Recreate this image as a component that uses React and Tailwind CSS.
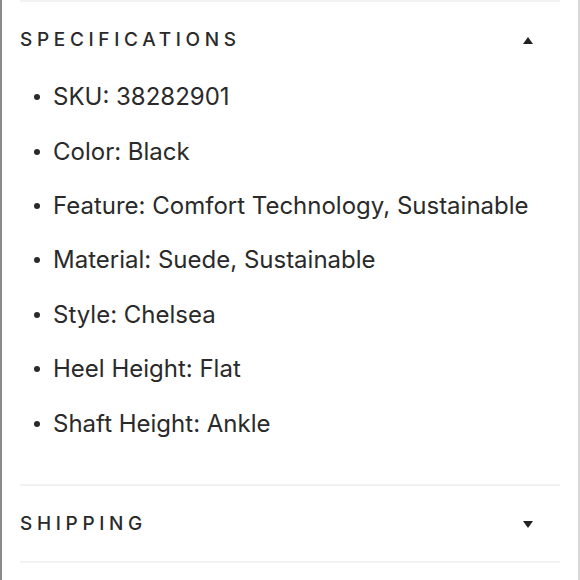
import React from "react";

const specs = [
  "SKU: 38282901",
  "Color: Black",
  "Feature: Comfort Technology, Sustainable",
  "Material: Suede, Sustainable",
  "Style: Chelsea",
  "Heel Height: Flat",
  "Shaft Height: Ankle",
];

const Caret = ({ up }) => (
  <svg width="10" height="7" viewBox="0 0 10 7" className="mr-[27px]">
    <path d={up ? "M5 0 L10 7 L0 7 Z" : "M0 0 L10 0 L5 7 Z"} fill="#222" />
  </svg>
);

const App = () => {
  return (
    <div
      className="w-[580px] h-[580px] bg-white border-l-2 border-l-[#8a8a8a] border-r-2 border-r-[#d8d8d8] overflow-hidden text-[#2a2a2a]"
      style={{ fontFamily: "Inter, 'Open Sans', sans-serif" }}
    >
      <div className="mx-[18px] border-t-2 border-[#f2f2f2]">
        <div className="flex items-center justify-between pt-[26px] pb-[18px]">
          <h2 className="text-[19px] font-medium tracking-[0.245em] leading-[24px]">SPECIFICATIONS</h2>
          <Caret up />
        </div>
        <ul className="pl-[14px] pb-[33px]">
          {specs.map((s) => (
            <li key={s} className="flex items-center h-[54.4px] text-[24px]">
              <span className="w-[6px] h-[6px] rounded-full bg-[#2a2a2a] mr-[13px]" />
              {s}
            </li>
          ))}
        </ul>
        <div className="border-t-2 border-[#f2f2f2] flex items-center justify-between h-[77px] pt-[2px]">
          <h2 className="text-[19px] font-medium tracking-[0.245em]">SHIPPING</h2>
          <Caret />
        </div>
        <div className="border-t-2 border-[#f2f2f2]" />
      </div>
    </div>
  );
};

export default App;
